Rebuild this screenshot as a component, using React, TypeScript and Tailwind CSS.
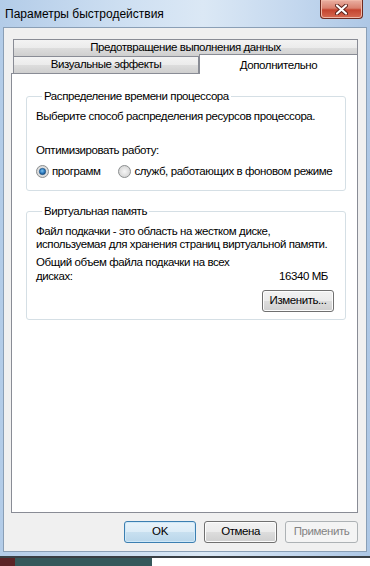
import type { ReactNode } from "react";

const tabBg =
  "bg-[linear-gradient(#f3f3f3_0%,#ebebeb_50%,#dddddd_50%,#cfcfcf_100%)]";

function Radio({ checked, id }: { checked?: boolean; id: string }) {
  return (
    <svg width="13" height="13" viewBox="0 0 13 13" className="shrink-0">
      <defs>
        <radialGradient id={`rb-${id}`} cx="50%" cy="50%" r="60%">
          <stop offset="0%" stopColor="#f6f6f6" />
          <stop offset="100%" stopColor="#cfcfcf" />
        </radialGradient>
        <radialGradient id={`rd-${id}`} cx="45%" cy="40%" r="60%">
          <stop offset="0%" stopColor="#7ec3f0" />
          <stop offset="60%" stopColor="#2d7bc0" />
          <stop offset="100%" stopColor="#174a7c" />
        </radialGradient>
      </defs>
      <circle cx="6.5" cy="6.5" r="6" fill={`url(#rb-${id})`} stroke="#8c8f90" />
      {checked && (
        <circle cx="6.5" cy="6.5" r="3.2" fill={`url(#rd-${id})`} stroke="#1d4f7e" strokeWidth="0.6" />
      )}
    </svg>
  );
}

function Button({
  children,
  variant = "normal",
  className = "",
}: {
  children: ReactNode;
  variant?: "normal" | "default" | "disabled";
  className?: string;
}) {
  const look =
    variant === "default"
      ? "border-[#3c7fb1] bg-[linear-gradient(#e8f3fa_0%,#dcecf7_50%,#c8e0f0_50%,#b9d6ea_100%)] text-black shadow-[inset_0_0_0_1px_#cfe8f8]"
      : variant === "disabled"
      ? "border-[#adb2b5] bg-[#f4f4f4] text-[#838383]"
      : "border-[#707070] bg-[linear-gradient(#f2f2f2_0%,#ebebeb_50%,#dddddd_50%,#cfcfcf_100%)] text-black shadow-[inset_0_0_0_1px_#fcfcfc]";
  return (
    <div
      className={`flex h-[22px] items-center justify-center rounded-[3px] border ${look} ${className}`}
    >
      {children}
    </div>
  );
}

function GroupBox({ title, children, className = "" }: { title: string; children: ReactNode; className?: string }) {
  return (
    <fieldset className={`min-w-0 rounded-[3px] border border-[#d5dfe5] ${className}`}>
      <legend className="ml-[6px] px-[2px] leading-[14px]">{title}</legend>
      {children}
    </fieldset>
  );
}

export default function App() {
  return (
    <div className="h-[566px] w-[370px] overflow-hidden bg-white font-['Liberation_Sans',Arial,sans-serif] text-[12px] text-black">
      {/* window frame */}
      <div className="flex h-[556px] flex-col bg-[linear-gradient(90deg,#b3cce8_0%,#cfe0f2_35%,#dbe8f5_55%,#c3d7ee_80%,#adc7e5_100%)]">
        <div className="flex h-[27px] shrink-0 items-start">
          <div className="flex h-[27px] flex-1 items-center pl-[5px]">Параметры быстродействия</div>
          <div className="mr-[7px] flex h-[19px] w-[43px] items-center justify-center rounded-b-[4px] border border-t-0 border-[#6e2a20] bg-[linear-gradient(#eab0a2_0%,#d9816f_45%,#c4442f_55%,#d56a52_100%)] shadow-[inset_0_0_0_1px_#f0b8a8]">
            <svg width="13" height="11" viewBox="0 0 13 11">
              <path d="M2 1.5 L11 9.5 M11 1.5 L2 9.5" stroke="#5a2019" strokeWidth="4" strokeLinecap="round" />
              <path d="M2 1.5 L11 9.5 M11 1.5 L2 9.5" stroke="#ffffff" strokeWidth="2.2" strokeLinecap="round" />
            </svg>
          </div>
        </div>

        {/* client area */}
        <div className="mx-[3px] flex h-[525px] flex-col whitespace-nowrap border border-[#8a9fb6] bg-[#f0f0f0] pl-[7px] pr-[8px] pt-[11px] text-[11.5px] tracking-[-0.42px]">
          {/* tabs */}
          <div className="flex h-[17px] pl-[2px]">
            <div className={`flex flex-1 items-center justify-center border border-b-0 border-[#898c95] ${tabBg}`}>
              Предотвращение выполнения данных
            </div>
          </div>
          <div className="flex h-[17px] items-end pl-[2px]">
            <div className={`flex h-[17px] w-[186px] items-center justify-center border border-b-0 border-[#898c95] ${tabBg}`}>
              Визуальные эффекты
            </div>
            <div className="relative z-10 -mb-px flex h-[20px] flex-1 items-start justify-center border border-b-0 border-[#898c95] bg-white pt-[2px]">
              Дополнительно
            </div>
          </div>

          {/* tab page */}
          <div className="flex h-[440px] flex-col border border-[#898c95] bg-white pl-[14px] pr-[11px] pt-[15px]">
            <GroupBox title="Распределение времени процессора" className="pb-[12px] pl-[9px]">
              <div className="mt-[6px] leading-[14px]">Выберите способ распределения ресурсов процессора.</div>
              <div className="mt-[20px] leading-[14px]">Оптимизировать работу:</div>
              <div className="mt-[7px] flex items-center leading-[14px]">
                <Radio checked id="a" />
                <span className="ml-[3px]">программ</span>
                <span className="ml-[18px]">
                  <Radio id="b" />
                </span>
                <span className="ml-[3px]">служб, работающих в фоновом режиме</span>
              </div>
            </GroupBox>

            <GroupBox title="Виртуальная память" className="mt-[13px] pb-[7px] pl-[9px] pr-[11px]">
              <div className="mt-[7px] leading-[13px]">
                Файл подкачки - это область на жестком диске,
                <br />
                используемая для хранения страниц виртуальной памяти.
              </div>
              <div className="mt-[5px] leading-[13.5px]">Общий объем файла подкачки на всех</div>
              <div className="flex justify-between pr-[6px] leading-[13.5px]">
                <span>дисках:</span>
                <span>16340 МБ</span>
              </div>
              <div className="mt-[7px] flex justify-end">
                <Button className="w-[72px]">Изменить...</Button>
              </div>
            </GroupBox>
          </div>

          {/* dialog buttons */}
          <div className="mt-[8px] flex justify-end gap-[8px]">
            <Button variant="default" className="w-[72px]">OK</Button>
            <Button className="w-[73px]">Отмена</Button>
            <Button variant="disabled" className="w-[73px]">Применить</Button>
          </div>
        </div>
      </div>

      {/* desktop below window */}
      <div className="h-[2px] bg-[#3a3f44]" />
      <div className="flex h-[8px]">
        <div className="w-[15px] bg-[#5b2326]" />
        <div className="w-[137px] bg-[#35585b]" />
        <div className="flex-1 bg-white" />
      </div>
    </div>
  );
}
